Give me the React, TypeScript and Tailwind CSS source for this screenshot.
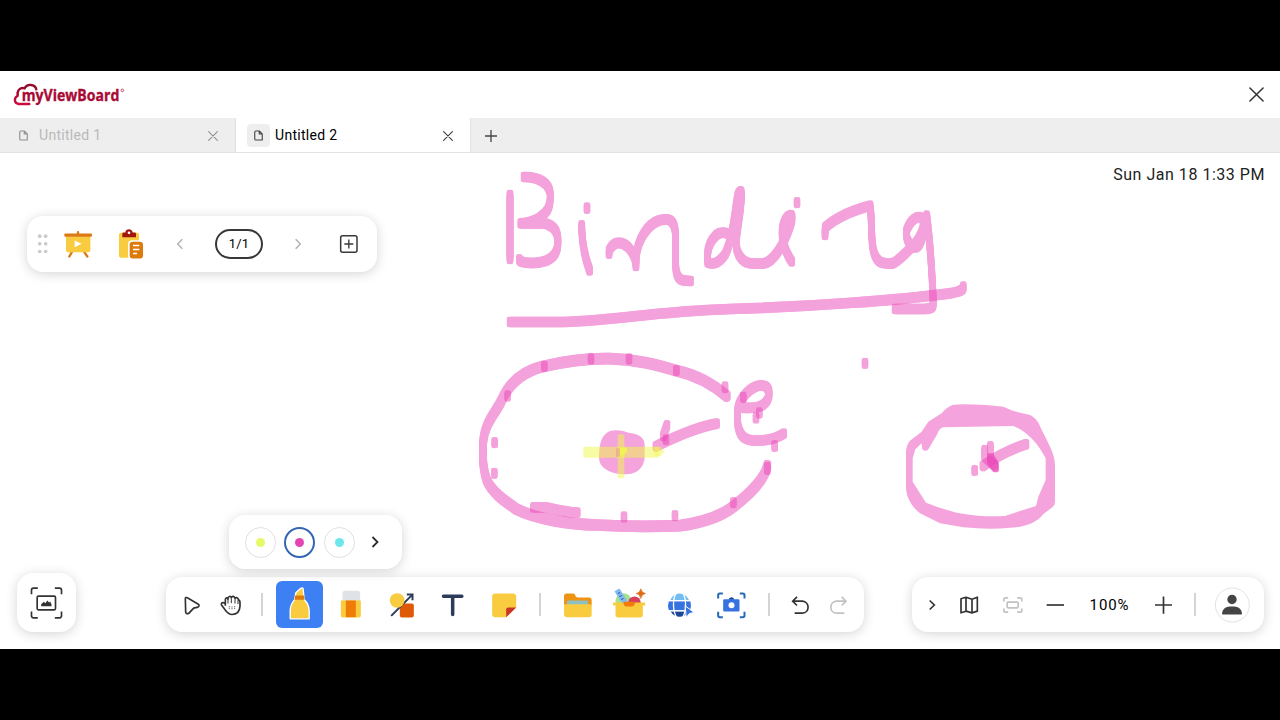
import type { ReactNode } from "react";

const PINK = "#eb47b9";
const YELLOW = "#f0f94a";

// The highlighter nib is a rounded block, taller than wide.
const NIB = [-3, 3].flatMap((x) => [-9, -4.5, 0, 4.5, 9].map((y) => [x, y]));

function Ink({ d, width = 14 }: { d: string; width?: number }) {
  return (
    <g opacity={0.5} fill="none" stroke={PINK} strokeWidth={width} strokeLinecap="round" strokeLinejoin="round">
      {NIB.map(([x, y]) => (
        <path key={`${x},${y}`} d={d} transform={`translate(${x} ${y})`} />
      ))}
    </g>
  );
}

const TITLE = [
  "M60 105V297",
  "M102 51C142 50 181 68 181 106C182 146 168 160 148 174C130 184 112 190 92 190H160C190 194 204 214 204 245C204 287 180 307 130 309C100 309 88 305 88 298",
  "M291 143V146",
  "M275 196C275 245 284 290 299 331",
  "M357 281L358 270C372 243 396 243 414 261C432 280 438 300 438 318C434 250 472 177 530 178C553 179 557 205 557 235V320C560 364 577 363 602 363",
  "M732 240C716 213 692 214 678 226C653 250 650 280 653 307C670 316 690 306 706 282C732 230 734 150 744 104C752 88 756 92 754 112C752 160 740 210 738 250C740 290 762 311 790 311H818C850 308 880 255 900 200C912 165 905 160 893 170C874 190 874 225 880 250C888 275 896 292 905 304",
  "M921 127V129",
  "M1005 225L1006 202C1035 175 1085 152 1140 137C1147 180 1142 235 1150 270C1160 313 1180 310 1205 311C1225 305 1245 280 1265 262C1300 225 1306 188 1296 174C1280 166 1262 180 1250 210C1246 230 1255 250 1268 262C1290 268 1298 240 1310 167C1320 245 1326 330 1330 430C1330 444 1322 447 1300 447H1215",
  "M60 486H200C350 486 480 455 720 447C970 440 1230 420 1380 400C1416 394 1420 388 1420 380",
];

const RING =
  "M770 168C735 138 680 105 620 92C560 75 500 58 420 56C350 54 280 65 215 80C150 97 112 140 93 185C75 220 45 250 40 300C36 350 38 385 50 420C65 455 100 480 140 508C200 538 300 553 380 555C450 559 550 560 630 557C700 547 755 527 790 500C840 462 885 415 892 377";

const ATOM = [
  "M190 502H225C255 507 280 516 322 518",
  "M815 202C840 206 872 204 886 188C902 170 900 150 888 140C868 129 842 144 825 164C802 190 802 210 802 240C805 290 825 302 860 302C900 302 920 295 941 281",
  "M740 251C690 260 620 288 558 319",
  "M591 256L580 288",
  "M223 78V80",
  "M363 56V58",
  "M477 56V58",
  "M619 91V93",
  "M765 140V144",
  "M113 167V169",
  "M74 307V309",
  "M73 399V401",
  "M462 530V532",
  "M615 526V528",
  "M790 487V489",
  "M892 381V389",
  "M914 316V320",
  "M820 171V173",
  "M868 218V220",
  "M858 233V235",
  "M588 299V300",
];

const ARROWHEAD = ["M408 163C370 175 330 192 279 228", "M254 241V242", "M284 180V200L316 230", "M301 169V210L317 231", "M301 205L314 224"];

function Icon({ box, className = "", children }: { box: string; className?: string; children: ReactNode }) {
  const [, , w, h] = box.split(" ").map(Number);
  return (
    <svg viewBox={box} width={w / 3} height={h / 3} fill="none" className={`shrink-0 overflow-visible ${className}`}>
      {children}
    </svg>
  );
}

function Cell({ className, children }: { className: string; children: ReactNode }) {
  return <button className={`flex h-full shrink-0 items-center justify-center ${className}`}>{children}</button>;
}

function Divider({ className }: { className: string }) {
  return (
    <div className={`flex shrink-0 justify-center ${className}`}>
      <span className="h-[23px] w-[2px] bg-[#d4d4d4]" />
    </div>
  );
}

function Cross({ className, width = 1.3 }: { className: string; width?: number }) {
  return (
    <svg viewBox="0 0 16 16" className={className} fill="none" stroke="currentColor" strokeWidth={width} strokeLinecap="round">
      <path d="M1 1L15 15M15 1L1 15" />
    </svg>
  );
}

function FileIcon() {
  return (
    <svg viewBox="0 0 12 14" className="h-[11px] w-[9px]" fill="none" stroke="currentColor" strokeWidth="1.5" strokeLinejoin="round">
      <path d="M2.5 1H7L11 5V13H2.5Q1 13 1 11.5V2.5Q1 1 2.5 1ZM7 1V5H11" />
    </svg>
  );
}

function Logo() {
  return (
    <svg viewBox="39 36 340 74" className="h-[24.7px] w-[113.3px] overflow-visible">
      <defs>
        <linearGradient id="brand" x1="0" y1="0" x2="0" y2="1">
          <stop offset="0" stopColor="#8f0a2c" />
          <stop offset="1" stopColor="#cf0a3e" />
        </linearGradient>
      </defs>
      <path
        d="M88 102H56C42 100 41 84 53 77C50 61 61 51 74 55C81 40 105 42 109 58"
        fill="none"
        stroke="url(#brand)"
        strokeWidth="7"
        strokeLinecap="round"
      />
      <text
        x="65"
        y="93"
        fontSize="47"
        textLength="293"
        lengthAdjust="spacingAndGlyphs"
        className="font-['Open_Sans',sans-serif] font-bold"
        fill="#a90a35"
        stroke="#a90a35"
        strokeWidth="1"
      >
        myViewBoard
      </text>
      <circle cx="367" cy="61" r="4" fill="none" stroke="#b50a38" strokeWidth="2" />
    </svg>
  );
}

function Drawing() {
  return (
    <svg viewBox="0 153 1280 496" className="absolute inset-0 h-full w-full">
      <g transform="translate(490 160) scale(.33333)">
        {TITLE.map((d) => (
          <Ink key={d} d={d} />
        ))}
      </g>
      <g transform="translate(470 340) scale(.33333)">
        <Ink d={RING} width={17} />
        {ATOM.map((d) => (
          <Ink key={d} d={d} />
        ))}
        <path
          opacity={0.5}
          fill={PINK}
          d="M420 273C440 268 462 273 475 278C505 280 524 292 524 315V355C520 385 500 402 475 402C450 405 430 400 415 392C395 382 387 370 387 350C388 315 392 285 420 273Z"
        />
        <g fill={YELLOW}>
          <rect opacity={0.5} x="340" y="320" width="228" height="33" rx="5" />
          <path opacity={0.45} d="M553 320H572L584 335L572 348H553Z" />
          <rect opacity={0.5} x="443" y="283" width="20" height="132" rx="5" />
          <path opacity={0.8} d="M450 325L470 322L472 335L458 348L448 342Z" />
        </g>
        <path opacity={0.25} fill={PINK} d="M438 325H450V350H438Z" />
      </g>
      <g transform="translate(890 390) scale(.33333)">
        <path
          opacity={0.5}
          fill={PINK}
          fillRule="evenodd"
          d="M190 44Q240 40 340 50L370 63L420 75Q438 84 447 102C465 145 495 185 495 225V335Q495 346 487 352L460 372C440 400 400 412 360 413Q300 420 220 412L150 400L90 370C65 350 48 320 48 290V190Q48 165 60 152L95 125L115 95L155 70Q170 50 190 44ZM160 112Q148 114 142 132L116 176Q108 188 97 178L95 160L76 178L68 205V275L108 338Q150 355 200 368Q270 382 345 378L390 363L438 348L445 320L467 270V205C445 160 405 120 370 108Z"
        />
        {ARROWHEAD.map((d) => (
          <Ink key={d} d={d} />
        ))}
      </g>
      <g transform="translate(865 363) scale(.33333)">
        <Ink d="M0 0V2" />
      </g>
    </svg>
  );
}

const PANEL = "flex items-center bg-white shadow-[0_2px_12px_rgba(0,0,0,0.17)]";

function PageBar() {
  return (
    <div className={`${PANEL} h-[56px] w-[350px] rounded-[16px]`}>
      <Cell className="w-8">
        <Icon box="45 82.5 48 72">
          <g fill="#cacaca">
            {[95, 118, 141].map((y) => (
              <g key={y}>
                <circle cx="59" cy={y} r="5.5" />
                <circle cx="77" cy={y} r="5.5" />
              </g>
            ))}
          </g>
        </Icon>
      </Cell>
      <Cell className="w-[38px]">
        <Icon box="126 70.5 96 96">
          <path d="M174 90V83M157 140L148 156M191 140L202 156" stroke="#dc7a18" strokeWidth="7" strokeLinecap="round" />
          <path d="M138 95H211V137Q211 143 205 143H144Q138 143 138 137Z" fill="#f9cb3f" />
          <rect x="133" y="87" width="83" height="10" rx="3" fill="#dc7a18" />
          <path d="M164 108L185 118L164 128Z" fill="#fff" />
        </Icon>
      </Cell>
      <Cell className="w-[68px]">
        <Icon box="285 70.5 96 96">
          <rect x="297" y="85" width="60" height="75" rx="6" fill="#f9cb3f" />
          <rect x="324" y="107" width="49" height="59" rx="12" fill="#fff" />
          <path d="M307 98V88Q307 84 311 84H316C317 71 336 71 338 84H344Q348 84 348 88V98Z" fill="#a3160e" />
          <circle cx="327" cy="85" r="4" fill="#fff" />
          <rect x="329" y="112" width="40" height="50" rx="9" fill="#dc7a0c" />
          <path d="M339 123H358M339 135H358M339 147H351" stroke="#fff" strokeWidth="4" />
        </Icon>
      </Cell>
      <Cell className="w-[30px]">
        <Icon box="432 70.5 96 96">
          <path d="M487 104L473 118.5L487 133" stroke="#b4b4b4" strokeWidth="4.5" />
        </Icon>
      </Cell>
      <div className="ml-5 flex h-[30px] w-12 shrink-0 items-center justify-center rounded-full border-2 border-[#383838] text-[13px] tracking-[0.2px] text-black">
        1/1
      </div>
      <Cell className="ml-5 w-[30px]">
        <Icon box="786 70.5 96 96">
          <path d="M827 104L841 118.5L827 133" stroke="#b4b4b4" strokeWidth="4.5" />
        </Icon>
      </Cell>
      <Cell className="ml-5 w-8">
        <Icon box="939 70.5 96 96">
          <rect x="962" y="94" width="49" height="49" rx="6" stroke="#383838" strokeWidth="4.5" />
          <path d="M986.5 105V132M973 118.5H1000" stroke="#383838" strokeWidth="4" />
        </Icon>
      </Cell>
    </div>
  );
}

function ColorPopup() {
  return (
    <div className={`${PANEL} absolute bottom-[63px] left-[63px] h-[54px] w-[173px] gap-[8.3px] rounded-[16px] pl-4`}>
      <span className="flex size-[31px] items-center justify-center rounded-full border border-[#e4dde3]">
        <span className="size-[9px] rounded-full bg-[#e6f966]" />
      </span>
      <span className="flex size-[31px] items-center justify-center rounded-full border-2 border-[#3466b4]">
        <span className="size-[9px] rounded-full bg-[#e345b3]" />
      </span>
      <span className="flex size-[31px] items-center justify-center rounded-full border border-[#e4dde3]">
        <span className="size-[9px] rounded-full bg-[#6ce6ea]" />
      </span>
      <svg viewBox="0 0 12 12" className="ml-1.5 size-3" fill="none" stroke="#2d2d2d" strokeWidth="1.8">
        <path d="M3.5 1L8.5 6L3.5 11" />
      </svg>
    </div>
  );
}

function ToolBar() {
  return (
    <div className="relative ml-[90px]">
      <div className={`${PANEL} h-[55px] w-[698px] rounded-[16px] pl-2`}>
        <Cell className="w-9">
          <Icon box="540 82.5 72 72">
            <path d="M556 100Q556 94 562 97L595 116Q600 121 594 125L581 128L567 143Q559 147 557 140Z" stroke="#333" strokeWidth="5" strokeLinejoin="round" />
          </Icon>
        </Cell>
        <Cell className="w-[42px]">
          <Icon box="657 82.5 72 72">
            <path
              d="M676 121V103C676 96 683 95 684 101C683 92 693 90 694 97C696 90 704 92 705 99C708 94 715 96 715 103C719 103 720 107 720 112V122C719 140 709 147 696 147C684 147 679 138 673 130L665 119C661 112 670 108 676 115"
              stroke="#333"
              strokeWidth="5"
              strokeLinejoin="round"
            />
            <path d="M684 101V114M694 99V113M705 101V114M714 104V116" stroke="#333" strokeWidth="3" />
            <path d="M688 122V130M696 123V132M704 122V130" stroke="#333" strokeWidth="2.5" strokeDasharray="3 2" />
          </Icon>
        </Cell>
        <Divider className="w-5" />
        <button className="ml-1 flex size-[47px] shrink-0 items-center justify-center rounded-[6px] bg-[#3d80f3]">
          <Icon box="862.5 82.5 72 72">
            <path
              d="M869 160V134Q870 116 882 103L886 82L900 69Q907 65 908 71L911 102Q925 116 926 134V160Z"
              fill="#f9cb3f"
              stroke="#fff"
              strokeWidth="4"
              strokeLinejoin="round"
            />
            <path d="M884 90H911L912 103H882Z" fill="#dc7a0c" />
          </Icon>
        </button>
        <Cell className="ml-px w-[51px]">
          <Icon box="10.5 55.5 96 96">
            <rect x="36" y="61" width="53" height="38" rx="8" fill="#dfe2e7" />
            <path d="M31 90H91V135Q91 141 85 141H37Q31 141 31 135Z" fill="#f9cb3f" />
            <path d="M46 90H76V140H46Z" fill="#ee7d08" />
          </Icon>
        </Cell>
        <Cell className="w-[51px]">
          <Icon box="163.5 55.5 96 96">
            <rect x="208" y="99" width="42" height="42" rx="6" fill="#df5a08" />
            <path d="M182 136L245 73" stroke="#2c3b59" strokeWidth="6" />
            <path d="M229 72H246V89" stroke="#2c3b59" strokeWidth="6" />
            <circle cx="200" cy="90" r="22" fill="#f9cb3f" />
          </Icon>
        </Cell>
        <Cell className="w-[51px]">
          <Icon box="316.5 55.5 96 96">
            <path d="M339 77H394M366.5 77V132" stroke="#2c3b59" strokeWidth="10.5" strokeLinecap="round" />
          </Icon>
        </Cell>
        <Cell className="w-[51px]">
          <Icon box="469.5 55.5 96 96">
            <path d="M494 69H547Q557 69 557 79V111L527 140H494Q485 140 485 131V79Q485 69 494 69Z" fill="#f9cb3f" />
            <path d="M527 140V117Q527 111 533 111H557Z" fill="#cb3527" />
          </Icon>
        </Cell>
        <Divider className="w-6" />
        <Cell className="w-[52px]">
          <Icon box="696 55.5 96 96">
            <path d="M702 105V77Q702 69 710 69H729Q735 69 736 75Q737 81 744 81H777Q785 81 785 89V105Z" fill="#ed9414" />
            <rect x="711" y="90" width="63" height="18" rx="3" fill="#8ebfc1" />
            <path d="M702 101H785V131Q785 140 776 140H711Q702 140 702 131Z" fill="#f9cb3f" />
          </Icon>
        </Cell>
        <Cell className="w-[51px]">
          <Icon box="40.5 55.5 96 96">
            <circle cx="69" cy="92" r="24" fill="#a9e28c" />
            <circle cx="102" cy="97" r="19" fill="#d6415e" />
            <path d="M42 62L57 54L81 92L66 101Z" fill="#82b9ef" />
            <path d="M52 69L59 66M57 78L64 75M62 87L69 84" stroke="#2554a5" strokeWidth="3" />
            <path d="M121 55Q123 67 135 69Q123 71 121 84Q119 71 107 69Q119 67 121 55Z" fill="#dc6b14" stroke="#dc6b14" strokeWidth="2" />
            <path d="M38 96H134V105H127V133Q127 141 119 141H53Q45 141 45 133V105H38Z" fill="#f9cb3f" />
            <path d="M69 94H103V100Q101 108 94 108H78Q71 108 69 100Z" fill="#f17a09" />
          </Icon>
        </Cell>
        <Cell className="w-[51px]">
          <Icon box="193.5 55.5 96 96">
            <path d="M209 89Q218 69 237 69Q256 69 266 89Z" fill="#74bdf3" />
            <path d="M205 92H270Q273 104 269 119H205Q200 105 205 92Z" fill="#3673e0" />
            <path d="M210 122H264Q255 138 237 139Q219 138 210 122Z" fill="#1c4597" />
            <path d="M202 90.5H272M202 121H272M227 68C216 85 216 123 229 141M247 68C258 85 258 123 246 141" stroke="#fff" strokeWidth="4" />
            <path d="M254 106L281 126L267 129L257 141Z" fill="#3673e0" stroke="#fff" strokeWidth="3" />
          </Icon>
        </Cell>
        <Cell className="w-[51px]">
          <Icon box="346.5 55.5 96 96">
            <path
              d="M353 84V74Q353 69 358 69H367M418 69H427Q432 69 432 74V84M432 124V135Q432 140 427 140H418M367 140H358Q353 140 353 135V124"
              stroke="#246ab5"
              strokeWidth="6"
            />
            <path d="M384 88Q386 80 393 80Q400 80 402 88Z" fill="#173f88" />
            <rect x="368" y="86" width="49" height="37" rx="4" fill="#3673e0" />
            <circle cx="393" cy="104" r="9" fill="#fff" />
          </Icon>
        </Cell>
        <Divider className="w-6" />
        <Cell className="w-[38px]">
          <Icon box="552 55.5 96 96">
            <path d="M591 79L578 92L591 105M579 92H607C630 94 630 127 607 128H584" stroke="#333" strokeWidth="5" />
          </Icon>
        </Cell>
        <Cell className="w-10">
          <Icon box="669 55.5 96 96">
            <path d="M725 79L738 92L725 105M737 92H709C687 94 687 127 709 128H733" stroke="#c2c2c2" strokeWidth="5" />
          </Icon>
        </Cell>
      </div>
      <ColorPopup />
    </div>
  );
}

function ZoomBar() {
  return (
    <div className={`${PANEL} ml-12 h-[55px] w-[352px] rounded-[16px] pl-1`}>
      <Cell className="w-8">
        <Icon box="48 55.5 96 96">
          <path d="M89 90L103 103.5L89 117" stroke="#333" strokeWidth="5" />
        </Icon>
      </Cell>
      <Cell className="w-[42px]">
        <Icon box="159 55.5 96 96">
          <path d="M183 85L198 80L216 86L232 80V122L216 127L198 122L183 127ZM198 80V122M216 86V127" stroke="#333" strokeWidth="5" strokeLinejoin="round" />
        </Icon>
      </Cell>
      <Cell className="w-[45px]">
        <Icon box="289.5 55.5 96 96">
          <path
            d="M310 93V87Q310 82 315 82H323M350 82H359Q364 82 364 87V93M364 114V120Q364 125 359 125H350M323 125H315Q310 125 310 120V114"
            stroke="#c2c2c2"
            strokeWidth="5"
          />
          <rect x="320" y="95" width="33" height="17" rx="3" stroke="#c2c2c2" strokeWidth="5" />
        </Icon>
      </Cell>
      <Cell className="w-10">
        <Icon box="417 55.5 96 96">
          <path d="M440 103.5H492" stroke="#333" strokeWidth="5" />
        </Icon>
      </Cell>
      <span className="w-[68px] shrink-0 pt-px pl-px text-center text-[15px] tracking-[0.9px] text-black">100%</span>
      <Cell className="w-10">
        <Icon box="741 55.5 96 96">
          <path d="M765 103.5H816M790.5 78V130" stroke="#333" strokeWidth="5" />
        </Icon>
      </Cell>
      <Divider className="w-6" />
      <Cell className="w-[50px]">
        <Icon box="948 55.5 96 96">
          <circle cx="997" cy="103.5" r="51" stroke="#e3e3e3" strokeWidth="3" />
          <circle cx="996" cy="87" r="14" fill="#444" />
          <path d="M966 130C968 112 978 108 996 108C1014 108 1024 112 1026 130Q1026 132 1023 132H969Q966 132 966 130Z" fill="#444" />
        </Icon>
      </Cell>
    </div>
  );
}

export default function App() {
  return (
    <div className="h-[720px] w-[1280px] overflow-hidden bg-black py-[71px] font-[Roboto,sans-serif]">
      <div className="flex h-[578px] flex-col bg-white">
        <header className="flex h-[47px] shrink-0 items-center justify-between pr-4 pl-[13px]">
          <Logo />
          <Cross className="size-[15px] text-[#333]" width={1.6} />
        </header>

        <nav className="flex h-[35px] shrink-0 border-b border-[#e2e2e2] bg-[#eeeeee] text-[14px]">
          <div className="flex w-[236px] items-center border-r border-[#dedede] pt-px pr-[17px] pl-[19px] text-[#8f8f8f]">
            <FileIcon />
            <span className="ml-[11px] flex-1 tracking-[0.3px] text-[#b9b9b9]">Untitled 1</span>
            <Cross className="size-2.5" width={1.7} />
          </div>
          <div className="flex w-[235px] items-center border-r border-[#e2e2e2] bg-white pt-px pr-[17px] pl-[11px] text-[#444]">
            <span className="flex size-[23px] items-center justify-center rounded-[4px] bg-[#eeeeee]">
              <FileIcon />
            </span>
            <span className="ml-[5px] flex-1 tracking-[0.3px] text-black">Untitled 2</span>
            <Cross className="size-2.5" width={1.9} />
          </div>
          <div className="flex w-[39px] items-center justify-center pt-px text-[#444]">
            <svg viewBox="0 0 12 12" className="size-3" stroke="currentColor" strokeWidth="1.3">
              <path d="M6 0V12M0 6H12" />
            </svg>
          </div>
        </nav>

        <main className="relative min-h-0 flex-1 overflow-hidden">
          <Drawing />
          <div className="relative flex h-full flex-col justify-between">
            <div className="flex items-start justify-between pr-[15px] pl-[27px]">
              <div className="pt-[63px]">
                <PageBar />
              </div>
              <time className="pt-[9.6px] text-[16px] tracking-[0.53px] text-[#222]">Sun Jan 18 1:33 PM</time>
            </div>
            <div className="flex items-end pb-[17px] pl-[17px]">
              <button className={`${PANEL} size-[59px] justify-center rounded-[16px]`}>
                <Icon box="91.5 64.5 96 96">
                  <path
                    d="M93 86V74Q93 68 99 68H112M163 68H177Q183 68 183 74V86M183 138V151Q183 157 177 157H163M112 157H99Q93 157 93 151V138"
                    stroke="#333"
                    strokeWidth="5"
                  />
                  <rect x="110" y="92" width="55" height="41" rx="4" stroke="#333" strokeWidth="5" />
                  <path d="M122 122V116L130 109L135 113L140 105L146 111L149 108L153 116V122Z" fill="#333" />
                </Icon>
              </button>
              <ToolBar />
              <ZoomBar />
            </div>
          </div>
        </main>
      </div>
    </div>
  );
}
